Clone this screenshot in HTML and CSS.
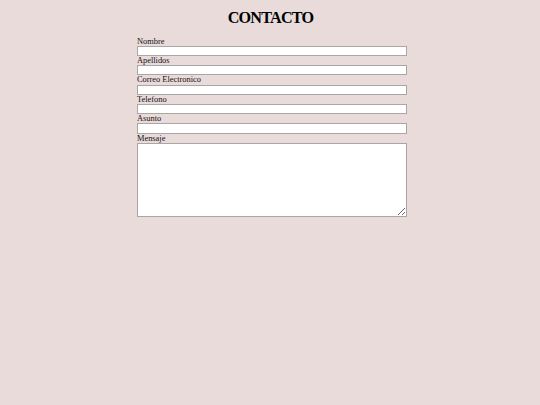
FILE: index.html
```html
<!DOCTYPE html>
<html lang="es">
<head>
<meta charset="utf-8">
<title>Contacto</title>
<link rel="stylesheet" href="styles.css">
</head>
<body>
<h1 class="title">CONTACTO</h1>
<form class="contact-form">
  <label class="field-label" for="nombre">Nombre</label>
  <input class="field-input" type="text" id="nombre">
  <label class="field-label" for="apellidos">Apellidos</label>
  <input class="field-input" type="text" id="apellidos">
  <label class="field-label" for="correo">Correo Electronico</label>
  <input class="field-input" type="text" id="correo">
  <label class="field-label" for="telefono">Telefono</label>
  <input class="field-input" type="text" id="telefono">
  <label class="field-label" for="asunto">Asunto</label>
  <input class="field-input" type="text" id="asunto">
  <label class="field-label" for="mensaje">Mensaje</label>
  <textarea class="field-area" id="mensaje"></textarea>
</form>
</body>
</html>
```

FILE: styles.css
```css
html, body {
  margin: 0;
  padding: 0;
  background: #eadbdb;
}
body {
  font-family: "Liberation Serif", "Times New Roman", serif;
  color: #000;
}
.title {
  margin: 9px 0 9.2px;
  padding-left: 1px;
  font-size: 16.2px;
  line-height: 18.4px;
  font-weight: bold;
  letter-spacing: -0.8px;
  text-align: center;
}
.contact-form {
  width: 270px;
  margin: 0 auto;
  padding-left: 4px;
  display: flex;
  flex-direction: column;
}
.field-label {
  display: block;
  font-size: 8.4px;
  line-height: 9.2px;
  color: #111;
}
.field-input {
  display: block;
  box-sizing: border-box;
  width: 100%;
  height: 10.2px;
  margin: 0;
  padding: 0;
  border: 1px solid #aaa6a6;
  background: #fff;
  font-size: 7px;
}
.field-area {
  display: block;
  box-sizing: border-box;
  width: 100%;
  height: 74px;
  margin: 0;
  padding: 0;
  border: 1px solid #aaa6a6;
  background: #fff;
  font-size: 7px;
}
```
